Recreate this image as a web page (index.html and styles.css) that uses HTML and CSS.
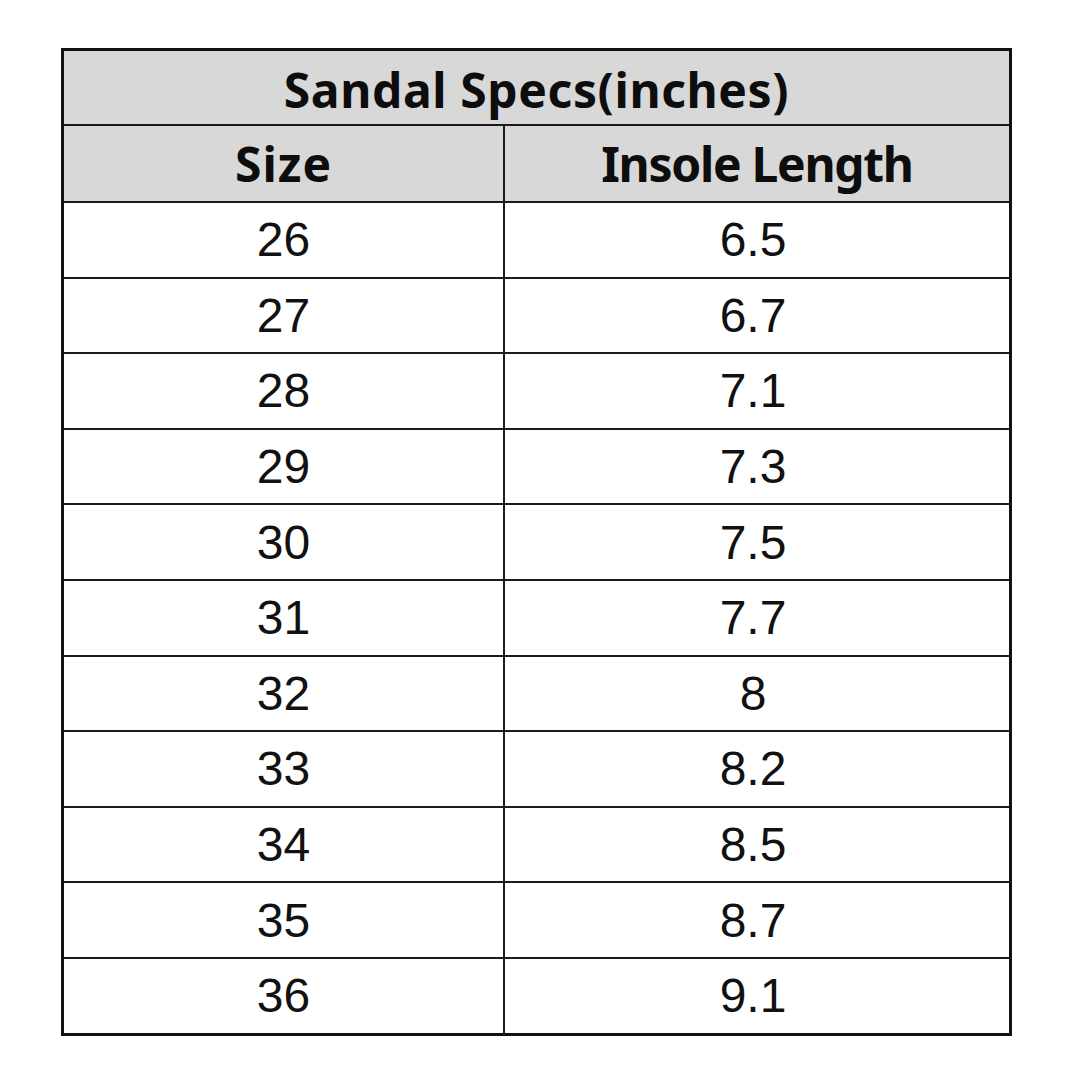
FILE: index.html
```html
<!DOCTYPE html>
<html lang="en">
<head>
<meta charset="utf-8">
<title>Sandal Specs</title>
<link rel="stylesheet" href="styles.css">
</head>
<body>
<div class="page">
  <table class="specs">
    <colgroup><col class="c1"><col class="c2"></colgroup>
    <thead>
      <tr class="title-row"><th colspan="2">Sandal Specs(inches)</th></tr>
      <tr class="head-row"><th class="h-size">Size</th><th class="h-len">Insole Length</th></tr>
    </thead>
    <tbody>
      <tr><td>26</td><td>6.5</td></tr>
      <tr><td>27</td><td>6.7</td></tr>
      <tr><td>28</td><td>7.1</td></tr>
      <tr><td>29</td><td>7.3</td></tr>
      <tr><td>30</td><td>7.5</td></tr>
      <tr><td>31</td><td>7.7</td></tr>
      <tr><td>32</td><td>8</td></tr>
      <tr><td>33</td><td>8.2</td></tr>
      <tr><td>34</td><td>8.5</td></tr>
      <tr><td>35</td><td>8.7</td></tr>
      <tr><td>36</td><td>9.1</td></tr>
    </tbody>
  </table>
</div>
</body>
</html>
```
FILE: styles.css
```css
html, body {
  margin: 0;
  padding: 0;
  background: #ffffff;
}
.page {
  padding: 48px 0 0 61px;
}
.specs {
  width: 951px;
  table-layout: fixed;
  border-collapse: separate;
  border-spacing: 0;
  border: 3px solid #111111;
  color: #111111;
}
.c1 { width: 441px; }
.specs th,
.specs td {
  padding: 0;
  text-align: center;
  vertical-align: middle;
  border-bottom: 2px solid #1a1a1a;
}
.specs tr > :first-child:not([colspan]) {
  border-right: 2px solid #1a1a1a;
}
.specs tbody tr:last-child td {
  border-bottom: none;
}
.specs th {
  background: #d8d8d8;
  font-family: "Noto Sans", "Open Sans", sans-serif;
  font-weight: 700;
  font-size: 48px;
  color: #0d0d0d;
}
.title-row th {
  height: 73px;
  letter-spacing: 0.6px;
  padding-top: 4px;
  height: 69px;
}
.head-row th { height: 75px; }
.h-size { letter-spacing: 1px; }
.h-len { letter-spacing: -1.3px; padding-right: 8px; }
.specs td {
  height: 73.6px;
  font-family: "Liberation Sans", Arial, sans-serif;
  font-size: 48px;
  background: #ffffff;
}
.specs td + td { padding-right: 8px; }
```
